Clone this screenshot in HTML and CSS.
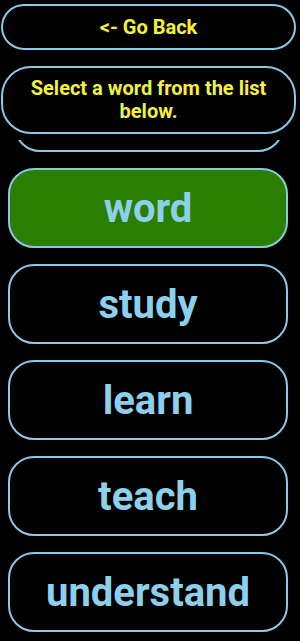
FILE: index.html
```html
<!DOCTYPE html>
<html lang="en">
<head>
  <meta charset="UTF-8">
  <meta name="viewport" content="width=device-width, initial-scale=1.0">
  <title>Word list</title>
  <link rel="stylesheet" href="styles.css">
</head>
<body>
  <div class="back">&lt;- Go Back</div>
  <div class="prompt">Select a word from the list below.</div>
  <div class="list">
    <div class="peek"><div class="word-item"></div></div>
    <div class="word-item active">word</div>
    <div class="word-item">study</div>
    <div class="word-item">learn</div>
    <div class="word-item">teach</div>
    <div class="word-item">understand</div>
  </div>
</body>
</html>
```

FILE: styles.css
```css
* {
  margin: 0;
  padding: 0;
  box-sizing: border-box;
}

body {
  background: #000;
  font-family: Roboto, "Liberation Sans", sans-serif;
  font-weight: 700;
  overflow: hidden;
  height: 641px;
}

.back,
.prompt {
  border: 2px solid #8cc8e2;
  color: #f6f23a;
  font-size: 20px;
  text-align: center;
  display: flex;
  align-items: center;
  justify-content: center;
}

.back {
  margin: 4px 4px 0 1px;
  height: 46px;
  border-radius: 23px;
}

.prompt {
  margin: 16px 4px 0 1px;
  height: 68px;
  border-radius: 30px;
  padding: 0 20px;
  line-height: 23px;
}

.list {
  display: flex;
  flex-direction: column;
  gap: 16px;
  margin-top: 6px;
}

.peek {
  height: 12px;
  overflow: hidden;
  margin: 0 16px 0 14px;
}

.peek .word-item {
  margin: -68px 0 0 0;
}

.word-item {
  margin: 0 12px 0 8px;
  height: 80px;
  flex-shrink: 0;
  border: 2px solid #8cc8e2;
  border-radius: 26px;
  color: #8ecfea;
  font-size: 40px;
  display: flex;
  align-items: center;
  justify-content: center;
}

.word-item.active {
  background: #2a7f02;
}
```
